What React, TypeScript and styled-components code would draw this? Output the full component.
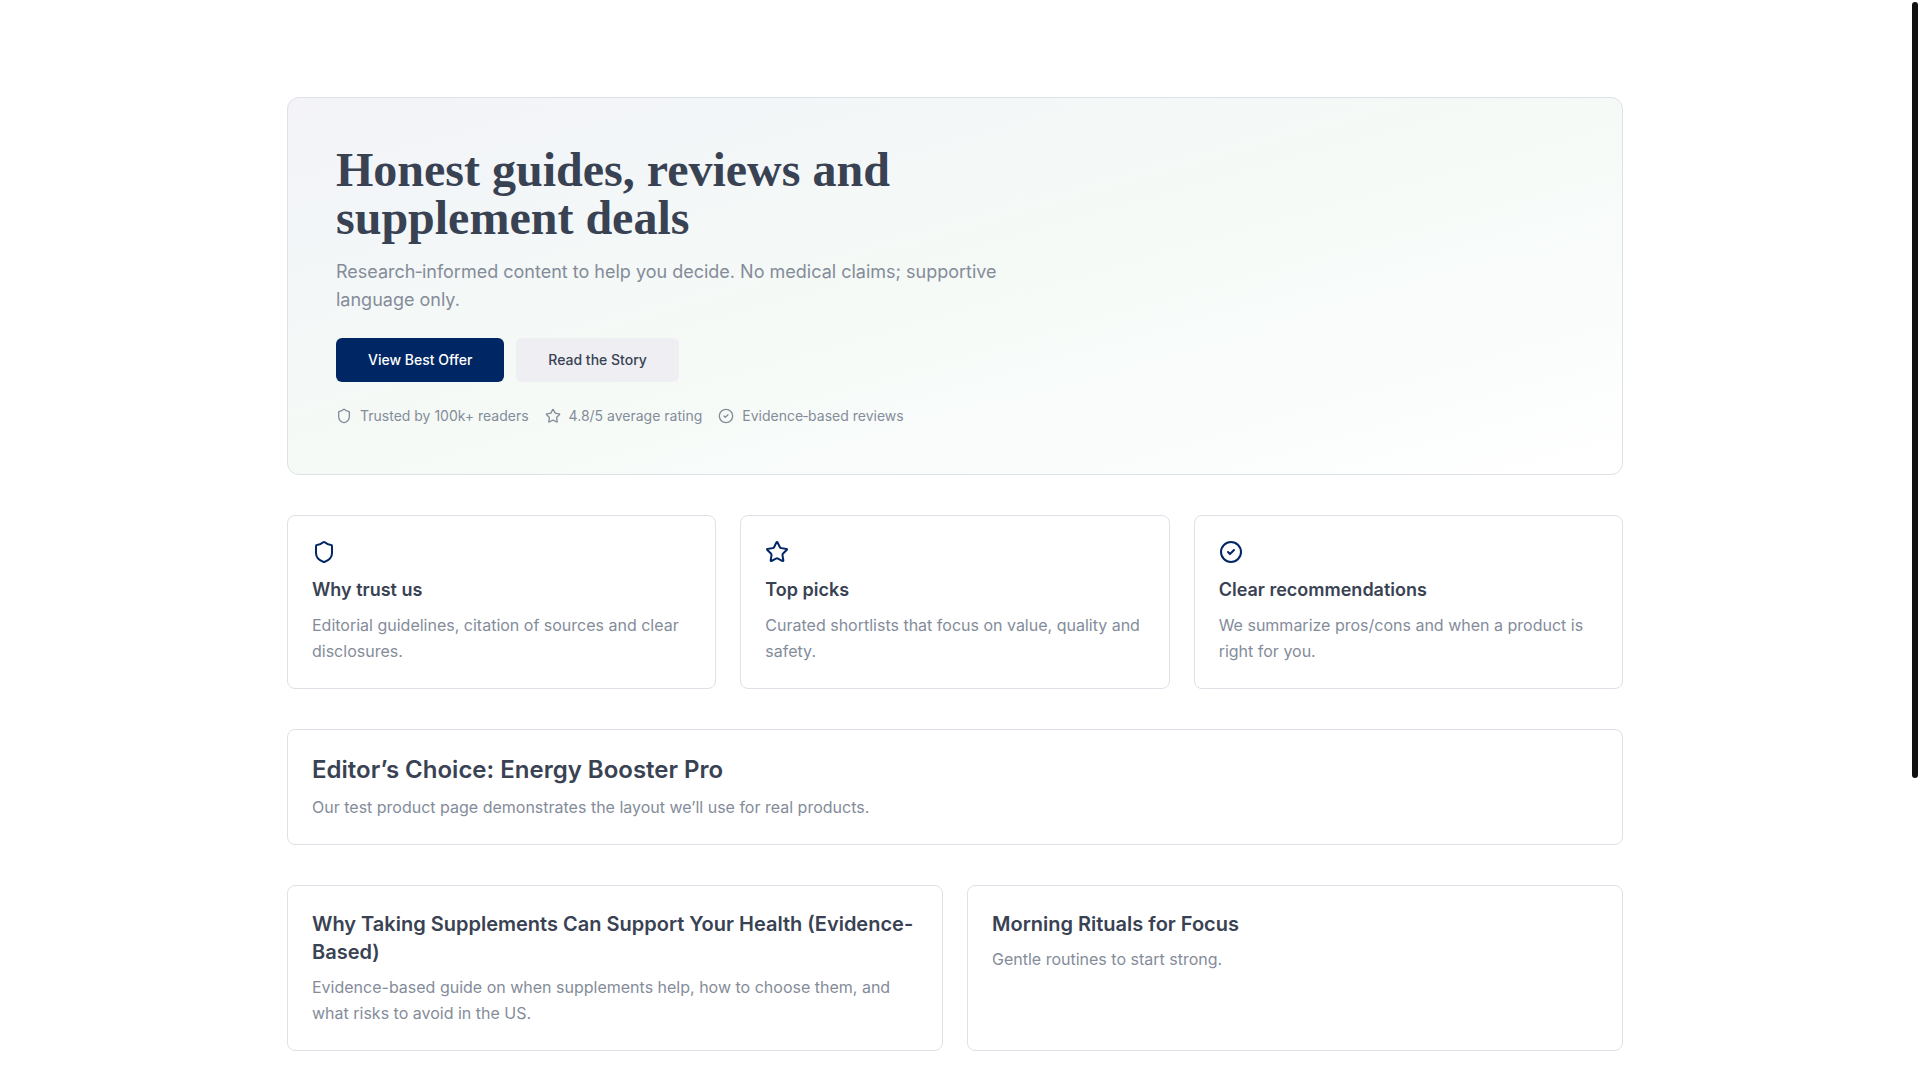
import React, { useEffect, useRef, useState } from "react";
import styled, { createGlobalStyle } from "styled-components";
import { Shield, Star } from "lucide-react";

const GlobalStyle = createGlobalStyle`
  *, *::before, *::after { box-sizing: border-box; }
  html { background: #ffffff; }
  body {
    margin: 0;
    color: #394253;
    font-family: Inter, "Liberation Sans", sans-serif;
    font-size: 16px;
    line-height: 26px;
    -webkit-font-smoothing: antialiased;
  }
`;

const Shell = styled.div`
  display: flex;
  height: 100vh;
`;

const Scroller = styled.div`
  flex: 1;
  min-width: 0;
  overflow-y: auto;
  scrollbar-width: none;
`;

const ScrollTrack = styled.div`
  flex: none;
  width: 10px;
  padding: 2px;
  overflow: hidden;
`;

const ScrollThumb = styled.div`
  border-radius: 3px;
  background: #111111;
`;

const Page = styled.main`
  display: flex;
  flex-direction: column;
  gap: 40px;
  max-width: 1400px;
  margin: 0 auto;
  padding: 97px 32px 444px;
`;

const Hero = styled.section`
  padding: 48px;
  border: 1px solid #dde1e8;
  border-radius: 12px;
  background: linear-gradient(
    to bottom right,
    #f3f3f8,
    #f3f6f8 18%,
    #f5faf6 50%,
    #f9fcfb 72%,
    #ffffff
  );
`;

const HeroContent = styled.div`
  max-width: 672px;
`;

const HeroTitle = styled.h1`
  margin: 0;
  font-family: "Liberation Serif", serif;
  font-size: 48px;
  font-weight: 700;
  line-height: 48px;
`;

const Lead = styled.p`
  margin: 16px 0 0;
  color: #848c9a;
  font-size: 18px;
  line-height: 28px;
`;

const Actions = styled.div`
  display: flex;
  flex-wrap: wrap;
  gap: 12px;
  margin-top: 24px;
`;

const Button = styled.button<{ $primary?: boolean }>`
  height: 44px;
  padding: 0 32px;
  border: 0;
  border-radius: 6px;
  background: ${(p) => (p.$primary ? "#002663" : "#eeeef3")};
  color: ${(p) => (p.$primary ? "#ffffff" : "#394253")};
  font: inherit;
  font-size: 14px;
  font-weight: 500;
  line-height: 20px;
  cursor: pointer;
`;

const TrustList = styled.ul`
  display: flex;
  flex-wrap: wrap;
  gap: 16px;
  margin: 24px 0 0;
  padding: 0;
  list-style: none;
  color: #848c9a;
  font-size: 14px;
  line-height: 20px;
`;

const TrustItem = styled.li`
  display: flex;
  align-items: center;
  gap: 8px;
`;

const Grid = styled.section<{ $columns: number }>`
  display: grid;
  grid-template-columns: repeat(${(p) => p.$columns}, minmax(0, 1fr));
  gap: 24px;

  @media (max-width: 768px) {
    grid-template-columns: minmax(0, 1fr);
  }
`;

const Card = styled.article`
  padding: 24px;
  border: 1px solid #e0e0e8;
  border-radius: 8px;
  background: #ffffff;
`;

const CardIcon = styled.div`
  display: flex;
  margin-bottom: 12px;
  color: #002663;
`;

const headingSizes = {
  small: "font-size: 18px; line-height: 28px;",
  medium: "font-size: 20px; line-height: 28px;",
  large: "font-size: 24px; line-height: 32px;",
};

const CardTitle = styled.h2<{ $size: keyof typeof headingSizes }>`
  margin: 0;
  font-weight: 600;
  ${(p) => headingSizes[p.$size]}
`;

const CardText = styled.p`
  margin: 8px 0 0;
  color: #848c9a;
`;

function CheckCircle({ size = 24 }: { size?: number }) {
  return (
    <svg
      width={size}
      height={size}
      viewBox="0 0 24 24"
      fill="none"
      stroke="currentColor"
      strokeWidth="2"
      strokeLinecap="round"
      strokeLinejoin="round"
      aria-hidden="true"
    >
      <circle cx="12" cy="12" r="10" />
      <path d="m9 12 2 2 4-4" />
    </svg>
  );
}

const trust = [
  { icon: Shield, label: "Trusted by 100k+ readers" },
  { icon: Star, label: "4.8/5 average rating" },
  { icon: CheckCircle, label: "Evidence‑based reviews" },
];

const features = [
  {
    icon: Shield,
    title: "Why trust us",
    text: "Editorial guidelines, citation of sources and clear disclosures.",
  },
  {
    icon: Star,
    title: "Top picks",
    text: "Curated shortlists that focus on value, quality and safety.",
  },
  {
    icon: CheckCircle,
    title: "Clear recommendations",
    text: "We summarize pros/cons and when a product is right for you.",
  },
];

const posts = [
  {
    title: "Why Taking Supplements Can Support Your Health (Evidence-Based)",
    text: "Evidence-based guide on when supplements help, how to choose them, and what risks to avoid in the US.",
  },
  {
    title: "Morning Rituals for Focus",
    text: "Gentle routines to start strong.",
  },
];

export default function App() {
  const scroller = useRef<HTMLDivElement>(null);
  const [thumb, setThumb] = useState({ height: 0, top: 0 });

  useEffect(() => {
    const el = scroller.current;
    if (!el) return;
    const update = () => {
      const ratio = el.clientHeight / el.scrollHeight;
      setThumb({
        height: ratio < 1 ? Math.round(el.clientHeight * ratio) - 4 : 0,
        top: Math.round(el.scrollTop * ratio),
      });
    };
    update();
    el.addEventListener("scroll", update);
    window.addEventListener("resize", update);
    return () => {
      el.removeEventListener("scroll", update);
      window.removeEventListener("resize", update);
    };
  }, []);

  return (
    <Shell>
      <GlobalStyle />
      <Scroller ref={scroller}>
        <Page>
          <Hero>
            <HeroContent>
              <HeroTitle>Honest guides, reviews and supplement deals</HeroTitle>
              <Lead>
                Research‑informed content to help you decide. No medical claims;
                supportive language only.
              </Lead>
              <Actions>
                <Button type="button" $primary>
                  View Best Offer
                </Button>
                <Button type="button">Read the Story</Button>
              </Actions>
              <TrustList>
                {trust.map(({ icon: Icon, label }) => (
                  <TrustItem key={label}>
                    <Icon size={16} />
                    {label}
                  </TrustItem>
                ))}
              </TrustList>
            </HeroContent>
          </Hero>

          <Grid $columns={3}>
            {features.map(({ icon: Icon, title, text }) => (
              <Card key={title}>
                <CardIcon>
                  <Icon size={24} />
                </CardIcon>
                <CardTitle $size="small">{title}</CardTitle>
                <CardText>{text}</CardText>
              </Card>
            ))}
          </Grid>

          <Card>
            <CardTitle $size="large">
              Editor’s Choice: Energy Booster Pro
            </CardTitle>
            <CardText>
              Our test product page demonstrates the layout we’ll use for real
              products.
            </CardText>
          </Card>

          <Grid $columns={2}>
            {posts.map(({ title, text }) => (
              <Card key={title}>
                <CardTitle $size="medium">{title}</CardTitle>
                <CardText>{text}</CardText>
              </Card>
            ))}
          </Grid>
        </Page>
      </Scroller>
      <ScrollTrack aria-hidden="true">
        <ScrollThumb
          style={{ height: thumb.height, marginTop: thumb.top }}
        />
      </ScrollTrack>
    </Shell>
  );
}
